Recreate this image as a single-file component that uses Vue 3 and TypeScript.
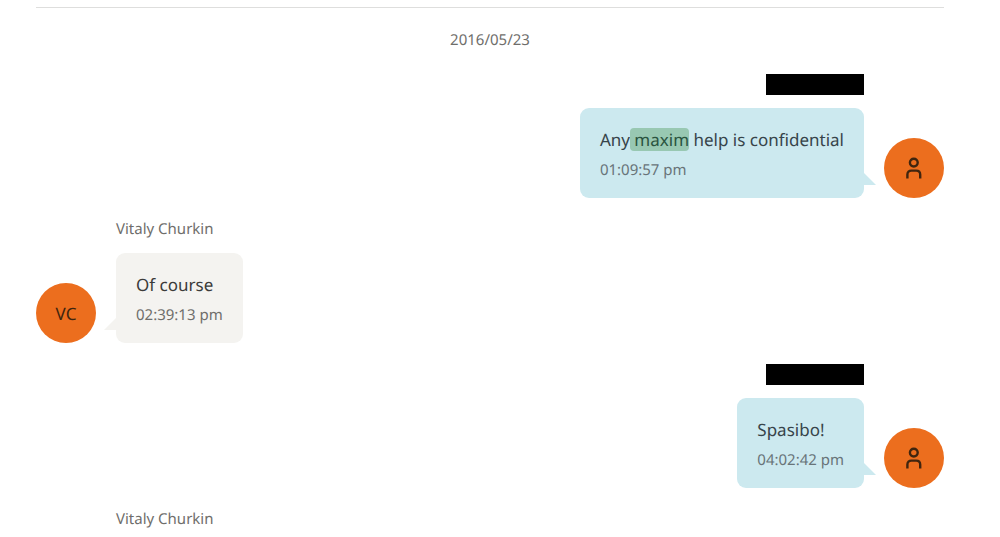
<script setup lang="ts">
interface Part {
  text: string
  hit?: boolean
}
interface Message {
  id: number
  own: boolean
  author?: string
  parts?: Part[]
  time?: string
}

const date = '2016/05/23'
const messages: Message[] = [
  {
    id: 1,
    own: true,
    parts: [{ text: 'Any' }, { text: ' maxim', hit: true }, { text: ' help is confidential' }],
    time: '01:09:57 pm',
  },
  { id: 2, own: false, author: 'Vitaly Churkin', parts: [{ text: 'Of course' }], time: '02:39:13 pm' },
  { id: 3, own: true, parts: [{ text: 'Spasibo!' }], time: '04:02:42 pm' },
  { id: 4, own: false, author: 'Vitaly Churkin' },
]

const initials = (name = ''): string =>
  name
    .split(' ')
    .map((word) => word[0])
    .join('')
</script>

<template>
  <main class="chat">
    <h2 class="date">{{ date }}</h2>
    <article v-for="m in messages" :key="m.id" class="message" :class="{ own: m.own }">
      <header class="author">
        <span v-if="m.author">{{ m.author }}</span>
        <span v-else class="redacted"></span>
      </header>
      <div v-if="m.parts" class="row">
        <div class="avatar">
          <svg v-if="m.own" width="16" height="22" viewBox="0 0 16 22" aria-hidden="true">
            <circle cx="7.8" cy="5.6" r="3.9" />
            <path d="M1.4 21.4V17.6C1.4 15 3 13.6 5.4 13.6H10.2C12.6 13.6 14.2 15 14.2 17.6V21.4" />
          </svg>
          <template v-else>{{ initials(m.author) }}</template>
        </div>
        <div class="bubble">
          <p class="text"><component :is="part.hit ? 'mark' : 'span'" v-for="(part, i) in m.parts" :key="i">{{ part.text }}</component></p>
          <time class="time">{{ m.time }}</time>
        </div>
      </div>
    </article>
  </main>
</template>

<style>
body {
  margin: 0;
  background: #fff;
}
</style>

<style scoped>
.chat {
  margin: 7px 56px 0 36px;
  border-top: 1px solid #dededd;
  font-family: "Noto Sans", "Open Sans", sans-serif;
  color: #6f6e6b;
  text-rendering: geometricPrecision;
}
.date {
  margin: 22px 0 24px;
  font-size: 15px;
  line-height: 20px;
  font-weight: 400;
  text-align: center;
}
.message {
  display: flex;
  flex-direction: column;
  align-items: flex-start;
  margin-bottom: 21px;
}
.message:last-child {
  margin-bottom: 0;
}
.own {
  align-items: flex-end;
}
.author {
  height: 21px;
  margin: 0 80px 13px;
  font-size: 15px;
  line-height: 21px;
}
.message:last-child .author {
  margin-bottom: 0;
}
.redacted {
  display: block;
  width: 98px;
  height: 21px;
  background: #000;
}
.row {
  display: flex;
  align-items: flex-end;
  gap: 20px;
}
.own .row {
  flex-direction: row-reverse;
}
.avatar {
  display: flex;
  align-items: center;
  justify-content: center;
  width: 60px;
  height: 60px;
  border-radius: 50%;
  background: #ec6e1e;
  color: #40250f;
  font-size: 17px;
}
.avatar svg {
  fill: none;
  stroke: #40250f;
  stroke-width: 2.4;
}
.bubble {
  position: relative;
  padding: 20px 20px 18px;
  border-radius: 9px;
  background: #f4f3f0;
}
.own .bubble {
  background: #cce9ef;
}
.bubble::after {
  content: "";
  position: absolute;
  bottom: 13px;
  right: 100%;
  width: 12px;
  height: 12px;
  background: inherit;
  clip-path: polygon(100% 0, 100% 100%, 0 100%);
}
.own .bubble::after {
  right: auto;
  left: 100%;
  clip-path: polygon(0 0, 100% 100%, 0 100%);
}
.text {
  margin: 0 0 8px;
  font-size: 17px;
  line-height: 24px;
  color: #3b3b3a;
  white-space: pre;
}
.own .text {
  color: #37444a;
}
mark {
  border-radius: 4px;
  background: #98c8b2;
  color: #2a5440;
}
.time {
  display: block;
  font-size: 15px;
  line-height: 20px;
}
.own .time {
  color: #687479;
}
</style>
